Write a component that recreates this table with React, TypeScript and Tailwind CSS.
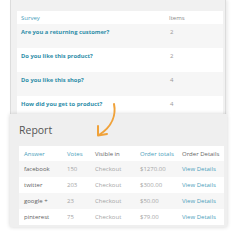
import React from "react";

const questions = [
  { q: "Are you a returning customer?", n: "2", bg: "bg-[#f6f6f6]" },
  { q: "Do you like this product?", n: "2", bg: "bg-white" },
  { q: "Do you like this shop?", n: "4", bg: "bg-[#f6f6f6]" },
  { q: "How did you get to product?", n: "4", bg: "bg-white" },
];

const report = [
  { a: "facebook", v: "150", t: "$1270.00", bg: "bg-[#f6f6f6]" },
  { a: "twitter", v: "203", t: "$300.00", bg: "bg-white" },
  { a: "google +", v: "23", t: "$50.00", bg: "bg-[#f6f6f6]" },
  { a: "pinterest", v: "75", t: "$79.00", bg: "bg-white" },
];

const cols = "grid grid-cols-[43px_28px_45px_42px_1fr]";

export default function App() {
  return (
    <div
      className="relative w-[247px] h-[247px] bg-white overflow-hidden"
      style={{ fontFamily: '"Open Sans", "Liberation Sans", sans-serif' }}
    >
      {/* survey list panel */}
      <div className="ml-[10px] w-[216px] h-[114px] bg-[#f1f1f1] border-x border-[#dcdcdc] shadow-[2px_0_3px_rgba(0,0,0,0.08)] pt-[11px] pl-[6px] pr-[2px] overflow-hidden">
        <div className="bg-white">
          <div className="grid grid-cols-[148px_1fr] h-[13px] items-center text-[6px] leading-[8px]">
            <div className="pl-[4px] text-[#4aa0bb]">Survey</div>
            <div className="pl-[4px] text-[#888]">Items</div>
          </div>
          {questions.map((r) => (
            <div key={r.q} className={`grid grid-cols-[148px_1fr] h-[24px] pt-[4px] ${r.bg}`}>
              <div className="pl-[4px] text-[5.8px] leading-[9px] font-bold text-[#2f8ea9]">{r.q}</div>
              <div className="pl-[5px] text-[6px] leading-[9px] text-[#999]">{r.n}</div>
            </div>
          ))}
        </div>
      </div>

      {/* report panel */}
      <div className="ml-[10px] w-[217px] h-[113px] bg-[#efefef] shadow-[0_0_4px_rgba(0,0,0,0.18)] pt-[9px] pl-[9px] pr-[3px]">
        <div className="text-[10.5px] leading-[14px] text-[#555]">Report</div>
        <div className="mt-[9px] bg-white text-[6px] leading-[8px]">
          <div className={`${cols} h-[15px] items-center`}>
            <div className="pl-[5px] text-[#4aa0bb]">Answer</div>
            <div className="pl-[5px] text-[#4aa0bb]">Votes</div>
            <div className="pl-[5px] text-[#666]">Visible in</div>
            <div className="pl-[5px] text-[#4aa0bb]">Order totals</div>
            <div className="pl-[5px] text-[#666]">Order Details</div>
          </div>
          {report.map((r) => (
            <div key={r.a} className={`${cols} h-[16px] items-center ${r.bg}`}>
              <div className="pl-[5px] text-[#5f5f5f]">{r.a}</div>
              <div className="pl-[5px] text-[#a5a5a5]">{r.v}</div>
              <div className="pl-[5px] text-[#a5a5a5]">Checkout</div>
              <div className="pl-[5px] text-[#a5a5a5]">{r.t}</div>
              <div className="pl-[5px] text-[#4aa0bb]">View Details</div>
            </div>
          ))}
        </div>
      </div>

      {/* curved pointer arrow */}
      <svg className="absolute left-0 top-0" width="247" height="247" viewBox="0 0 247 247" fill="none">
        <path
          d="M114 104 C116 114 113 126 99 135"
          stroke="#f0a23a"
          strokeWidth="2"
          strokeLinecap="round"
        />
        <path
          d="M98 126 L98 135.5 L107 134"
          stroke="#f0a23a"
          strokeWidth="2"
          strokeLinecap="round"
          strokeLinejoin="round"
        />
      </svg>
    </div>
  );
}
